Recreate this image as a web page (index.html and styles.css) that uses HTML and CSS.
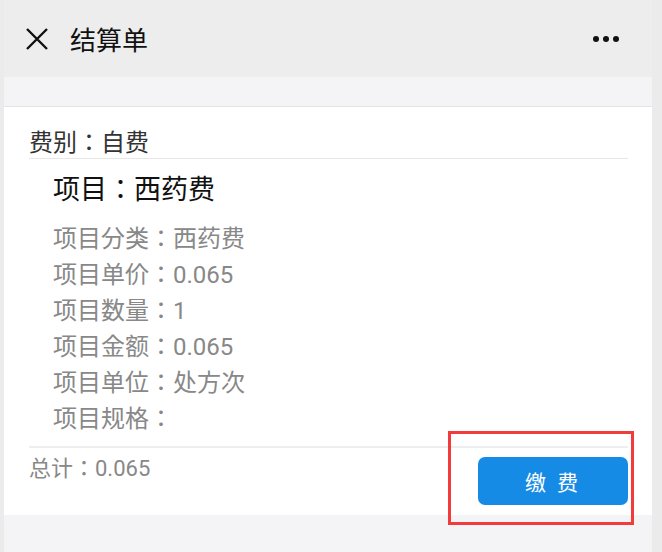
FILE: index.html
```html
<!DOCTYPE html>
<html lang="zh-CN">
<head>
    <meta charset="UTF-8">
    <meta name="viewport" content="width=device-width, initial-scale=1.0">
    <title>结算单</title>
    <link rel="stylesheet" href="styles.css">
</head>
<body>

    <div class="page">
        <header class="top-bar">
            <svg class="close-icon" width="24" height="24" viewBox="0 0 24 24">
                <path d="M2 2 L22 22 M22 2 L2 22" stroke="#111" stroke-width="2.4" fill="none"/>
            </svg>
            <h1 class="top-title">结算单</h1>
            <div class="more-dots"><span></span><span></span><span></span></div>
        </header>

        <div class="spacer"></div>

        <div class="bill-card">
            <div class="fee-type">费别：自费</div>

            <div class="item-block">
                <div class="item-title">项目：西药费</div>
                <ul class="item-details">
                    <li>项目分类：西药费</li>
                    <li>项目单价：0.065</li>
                    <li>项目数量：1</li>
                    <li>项目金额：0.065</li>
                    <li>项目单位：处方次</li>
                    <li>项目规格：</li>
                </ul>
            </div>

            <div class="bill-footer">
                <div class="total">总计：0.065</div>
                <button class="pay-button" type="button">缴 费</button>
            </div>
        </div>

        <div class="highlight-box"></div>
    </div>

</body>
</html>
```

FILE: styles.css
```css
*, *::before, *::after {
    box-sizing: border-box;
    margin: 0;
    padding: 0;
}

html, body {
    height: 100%;
    font-family: Roboto, "Noto Sans CJK JP", "Noto Sans CJK SC", sans-serif;
    font-feature-settings: "locl" 0; /* keep the centred full-width colon */
    background-color: #ebebeb;
    color: #333;
}

.page {
    position: relative;
    margin-left: 4px;
    width: 648px;
    min-height: 100%;
    background-color: #f4f4f7;
}

.top-bar {
    height: 77px;
    background-color: #ededed;
    display: flex;
    align-items: center;
    padding: 0 33px 0 21px;
}

.close-icon {
    margin-top: 1px;
}

.top-title {
    margin-left: 21px;
    font-size: 26px;
    font-weight: 400;
    color: #111;
    flex: 1;
}

.more-dots {
    display: flex;
    gap: 4px;
}

.more-dots span {
    width: 6px;
    height: 6px;
    border-radius: 50%;
    background-color: #111;
}

.spacer {
    height: 30px;
    border-bottom: 1px solid #e4e4e6;
}

.bill-card {
    background-color: #ffffff;
    padding: 0 24px 0 25px;
}

.fee-type {
    padding-top: 22px;
    font-size: 24px;
    line-height: 29px;
    color: #333;
    border-bottom: 1px solid #e6e6e6;
}

.item-block {
    padding: 13px 0 9px 24px;
    border-bottom: 2px solid #eeeeee;
}

.item-title {
    font-size: 27px;
    line-height: 36px;
    color: #111;
    margin-bottom: 13px;
}

.item-details {
    list-style: none;
}

.item-details li {
    font-size: 24px;
    line-height: 36px;
    color: #888;
}

.bill-footer {
    display: flex;
    justify-content: space-between;
    align-items: flex-start;
    padding: 9px 0 10px;
}

.total {
    font-size: 22px;
    line-height: 24px;
    color: #888;
}

.pay-button {
    width: 150px;
    height: 48px;
    border: none;
    border-radius: 7px;
    background-color: #168be6;
    color: #ffffff;
    font-family: inherit;
    font-size: 21px;
    letter-spacing: 3px;
}

/* annotation frame drawn over the button */
.highlight-box {
    position: absolute;
    left: 444px;
    top: 431px;
    width: 186px;
    height: 94px;
    border: 3px solid #f23c3c;
}
```
